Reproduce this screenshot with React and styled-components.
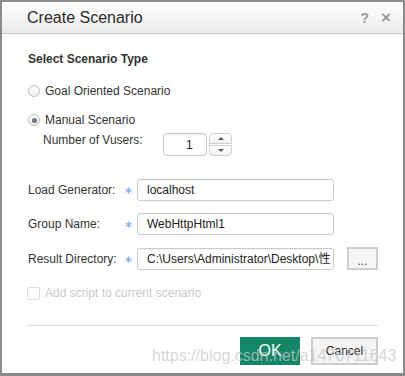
import React, { useState } from 'react';
import styled, { createGlobalStyle } from 'styled-components';

const GlobalStyle = createGlobalStyle`
  html, body {
    margin: 0;
    padding: 0;
    background: #ffffff;
  }
  body {
    font-family: "Liberation Sans", Arial, sans-serif;
    color: #333;
  }
`;

const Dialog = styled.div`
  position: relative;
  width: 405px;
  height: 376px;
  box-sizing: border-box;
  border: 2px solid #8b8b8b;
  border-bottom-width: 3px;
  background: #fff;
  display: flex;
  flex-direction: column;
  overflow: hidden;
`;

const TitleBar = styled.div`
  height: 31px;
  flex: none;
  display: flex;
  align-items: center;
  padding: 0 12px 0 25px;
  background: linear-gradient(#ffffff, #ececec);
  border-bottom: 1px solid #c8c8c8;
`;

const Title = styled.div`
  flex: 1;
  font-size: 16px;
  color: #2b2b2b;
  line-height: 18px;
  padding-top: 1px;
`;

const TitleIcon = styled.span`
  font-size: ${p => p.size || 14}px;
  color: #9a9a9a;
  margin-left: ${p => p.gap || 0}px;
  line-height: 16px;
  font-weight: bold;
`;

const Body = styled.div`
  flex: 1;
  display: flex;
  flex-direction: column;
  padding: 0 25px 0 26px;
  font-size: 12px;
`;

const SectionTitle = styled.div`
  margin-top: 18px;
  font-weight: bold;
  line-height: 14px;
  color: #333;
`;

const RadioRow = styled.label`
  display: flex;
  align-items: center;
  margin-top: ${p => p.top}px;
  line-height: 14px;
  cursor: pointer;
`;

const RadioCircle = styled.span`
  width: 12px;
  height: 12px;
  box-sizing: border-box;
  border-radius: 50%;
  border: 1px solid #b9b9b9;
  background: linear-gradient(#ffffff, #ececec);
  margin-right: 5px;
  display: flex;
  align-items: center;
  justify-content: center;
  &::after {
    content: '';
    width: 5px;
    height: 5px;
    border-radius: 50%;
    background: ${p => (p.checked ? '#777' : 'transparent')};
  }
`;

const VusersRow = styled.div`
  display: flex;
  align-items: flex-start;
  margin-top: 6px;
  padding-left: 15px;
`;

const VusersLabel = styled.span`
  line-height: 14px;
  width: 120px;
`;

const SpinBox = styled.div`
  display: flex;
  gap: 2px;
`;

const SpinInput = styled.div`
  width: 44px;
  height: 23px;
  box-sizing: border-box;
  border: 1px solid #c9c9c9;
  border-radius: 4px;
  box-shadow: inset 0 1px 1px rgba(0, 0, 0, 0.06);
  text-align: right;
  padding-right: 13px;
  font-size: 13px;
  line-height: 21px;
  color: #333;
`;

const SpinButtons = styled.div`
  width: 23px;
  display: flex;
  flex-direction: column;
  gap: 1px;
`;

const SpinButton = styled.div`
  height: 11px;
  box-sizing: border-box;
  border: 1px solid #cfcfcf;
  border-radius: ${p => (p.up ? '4px 4px 0 0' : '0 0 4px 4px')};
  background: linear-gradient(#ffffff, #f1f1f1);
  display: flex;
  align-items: center;
  justify-content: center;
  &::after {
    content: '';
    border-left: 3px solid transparent;
    border-right: 3px solid transparent;
    ${p => (p.up ? 'border-bottom: 3px solid #555;' : 'border-top: 3px solid #555;')}
  }
`;

const FormGrid = styled.div`
  display: grid;
  grid-template-columns: 96px 13px 197px 31px;
  column-gap: 0;
  row-gap: 12px;
  margin-top: 23px;
  align-items: center;
`;

const FieldLabel = styled.span`
  line-height: 14px;
`;

const Required = styled.span`
  color: #7aa7ee;
  font-family: "DejaVu Sans", sans-serif;
  font-size: 11px;
  line-height: 14px;
  padding-top: 2px;
`;

const TextBox = styled.div`
  height: 22px;
  box-sizing: border-box;
  border: 1px solid #cbcbcb;
  border-radius: 3px;
  box-shadow: inset 0 1px 1px rgba(0, 0, 0, 0.05);
  padding: 0 3px 0 9px;
  line-height: 20px;
  white-space: nowrap;
  overflow: hidden;
  font-family: "Liberation Sans", "Noto Sans CJK SC", sans-serif;
  color: #222;
`;

const BrowseButton = styled.button`
  margin-left: 13px;
  width: 31px;
  height: 23px;
  box-sizing: border-box;
  border: 2px solid #cfcfcf;
  background: #f5f5f5;
  font-family: "Liberation Sans", Arial, sans-serif;
  font-size: 12px;
  color: #444;
  padding: 4px 0 0;
  line-height: 12px;
`;

const CheckRow = styled.label`
  display: flex;
  align-items: center;
  margin-top: 16px;
  color: #c9c9c9;
  line-height: 14px;
`;

const CheckBox = styled.span`
  width: 13px;
  height: 13px;
  box-sizing: border-box;
  border: 1px solid #dcdcdc;
  border-radius: 2px;
  margin-left: -1px;
  margin-right: 5px;
`;

const Separator = styled.div`
  margin-top: 25px;
  height: 1px;
  background: #dedede;
  margin-left: -1px;
`;

const ButtonRow = styled.div`
  display: flex;
  justify-content: flex-end;
  gap: 11px;
  margin-top: 11px;
`;

const ActionButton = styled.button`
  height: 28px;
  width: ${p => p.w}px;
  box-sizing: border-box;
  font-family: "Liberation Sans", Arial, sans-serif;
  padding: 0;
  border: ${p => (p.primary ? 'none' : '2px solid #cccccc')};
  background: ${p => (p.primary ? '#138767' : '#f4f4f4')};
  color: ${p => (p.primary ? '#fff' : '#222')};
  font-size: ${p => (p.primary ? 16 : 12)}px;
`;

const Watermark = styled.div`
  position: absolute;
  left: 150px;
  top: 345px;
  font-family: "Liberation Sans", Arial, sans-serif;
  font-size: 16px;
  line-height: 18px;
  color: rgba(200, 200, 200, 0.75);
  pointer-events: none;
  white-space: nowrap;
`;

const fields = [
  { label: 'Load Generator:', value: 'localhost' },
  { label: 'Group Name:', value: 'WebHttpHtml1' },
  { label: 'Result Directory:', value: 'C:\\Users\\Administrator\\Desktop\\性', browse: true },
];

export default function App() {
  const [mode, setMode] = useState('manual');

  return (
    <>
      <GlobalStyle />
      <Dialog>
        <TitleBar>
          <Title>Create Scenario</Title>
          <TitleIcon size={14}>?</TitleIcon>
          <TitleIcon size={17} gap={12}>×</TitleIcon>
        </TitleBar>
        <Body>
          <SectionTitle>Select Scenario Type</SectionTitle>
          <RadioRow top={18} onClick={() => setMode('goal')}>
            <RadioCircle checked={mode === 'goal'} />
            Goal Oriented Scenario
          </RadioRow>
          <RadioRow top={15} onClick={() => setMode('manual')}>
            <RadioCircle checked={mode === 'manual'} />
            Manual Scenario
          </RadioRow>
          <VusersRow>
            <VusersLabel>Number of Vusers:</VusersLabel>
            <SpinBox>
              <SpinInput>1</SpinInput>
              <SpinButtons>
                <SpinButton up />
                <SpinButton />
              </SpinButtons>
            </SpinBox>
          </VusersRow>
          <FormGrid>
            {fields.map(f => (
              <React.Fragment key={f.label}>
                <FieldLabel>{f.label}</FieldLabel>
                <Required>∗</Required>
                <TextBox>{f.value}</TextBox>
                {f.browse ? <BrowseButton>...</BrowseButton> : <span />}
              </React.Fragment>
            ))}
          </FormGrid>
          <CheckRow>
            <CheckBox />
            Add script to current scenario
          </CheckRow>
          <Separator />
          <ButtonRow>
            <ActionButton primary w={60}>OK</ActionButton>
            <ActionButton w={67}>Cancel</ActionButton>
          </ButtonRow>
        </Body>
        <Watermark>https://blog.csdn.net/a1476711643</Watermark>
      </Dialog>
    </>
  );
}
